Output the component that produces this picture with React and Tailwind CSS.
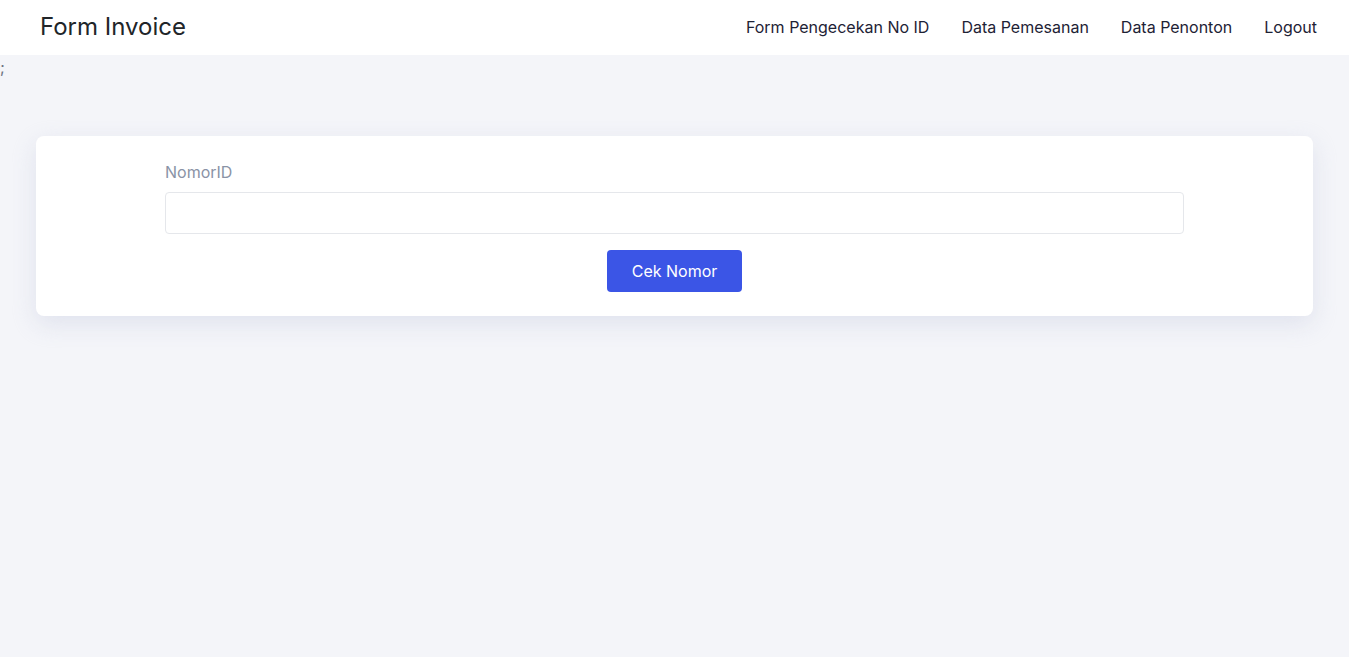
export default function App() {
  return (
    <div className="min-h-[657px] bg-[#f4f5f9] font-['Inter',sans-serif]">
      <header className="h-[55px] bg-white flex items-center justify-between pl-[40px] pr-[32px] pb-[2px]">
        <div className="text-[24px] text-[#212529] leading-none">Form Invoice</div>
        <nav className="flex items-center gap-[32px] text-[16px] text-[#1e2235]">
          <a>Form Pengecekan No ID</a>
          <a>Data Pemesanan</a>
          <a>Data Penonton</a>
          <a>Logout</a>
        </nav>
      </header>
      <div className="text-[16px] leading-[24px] text-[#6b7280]">;</div>
      <div className="mx-[36px] mt-[57px] bg-white rounded-[8px] shadow-[0_8px_24px_rgba(200,205,225,0.45)] pt-[24px] pb-[24px] px-[129px]">
        <label className="block text-[16px] leading-[24px] text-[#8a93a6] mb-[8px]">NomorID</label>
        <input className="block w-full h-[42px] border border-[#e5e7eb] rounded-[4px] bg-white" />
        <div className="flex justify-center mt-[16px]">
          <button className="w-[135px] h-[42px] bg-[#3b55e6] text-white text-[16px] rounded-[4px]">Cek Nomor</button>
        </div>
      </div>
    </div>
  );
}
